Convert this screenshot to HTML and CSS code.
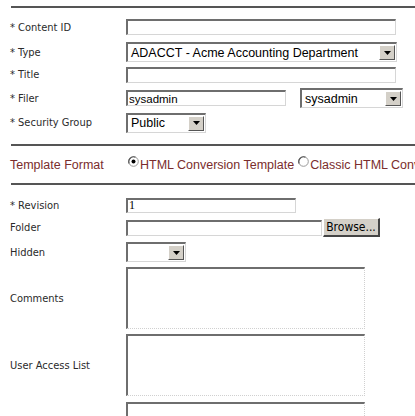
FILE: index.html
```html
<!DOCTYPE html>
<html lang="en">
<head>
    <meta charset="UTF-8">
    <title>Check In</title>
    <link rel="stylesheet" href="styles.css">
</head>
<body>
    <div class="form">
        <div class="row sep-row">
            <div class="label"><hr></div>
            <div class="field"><hr></div>
        </div>

        <div class="row r-content">
            <div class="label">* Content ID</div>
            <div class="field"><input type="text" class="text w-long"></div>
        </div>

        <div class="row r-type">
            <div class="label">* Type</div>
            <div class="field">
                <div class="select w-type">
                    <span class="value">ADACCT - Acme Accounting Department</span>
                    <span class="arrow"><svg width="7" height="4" viewBox="0 0 7 4"><path d="M0 0h7L3.5 4z" fill="#000"/></svg></span>
                </div>
            </div>
        </div>

        <div class="row r-title">
            <div class="label">* Title</div>
            <div class="field"><input type="text" class="text w-long"></div>
        </div>

        <div class="row r-filer">
            <div class="label">* Filer</div>
            <div class="field">
                <input type="text" class="text w-filer" value="sysadmin">
                <div class="select w-filersel">
                    <span class="value">sysadmin</span>
                    <span class="arrow"><svg width="7" height="4" viewBox="0 0 7 4"><path d="M0 0h7L3.5 4z" fill="#000"/></svg></span>
                </div>
            </div>
        </div>

        <div class="row r-security">
            <div class="label">* Security Group</div>
            <div class="field">
                <div class="select w-group">
                    <span class="value">Public</span>
                    <span class="arrow"><svg width="7" height="4" viewBox="0 0 7 4"><path d="M0 0h7L3.5 4z" fill="#000"/></svg></span>
                </div>
            </div>
        </div>

        <div class="row sep-row r-sep2">
            <div class="label"><hr></div>
            <div class="field"><hr></div>
        </div>

        <div class="row r-format">
            <div class="label section">Template Format</div>
            <div class="field section">
                <span class="radio"><svg width="11" height="11" viewBox="0 0 11 11"><circle cx="5.5" cy="5.5" r="4.8" fill="#fff" stroke="#999"/><path d="M1.2 7.5A4.8 4.8 0 0 1 7.5 1.2" fill="none" stroke="#555" stroke-width="1.2"/><circle cx="5.5" cy="5.5" r="2" fill="#000"/></svg></span>HTML Conversion Template
                <span class="radio gap"><svg width="11" height="11" viewBox="0 0 11 11"><circle cx="5.5" cy="5.5" r="4.8" fill="#fff" stroke="#999"/><path d="M1.2 7.5A4.8 4.8 0 0 1 7.5 1.2" fill="none" stroke="#555" stroke-width="1.2"/></svg></span>Classic HTML Conversion Template
            </div>
        </div>

        <div class="row sep-row r-sep3">
            <div class="label"><hr></div>
            <div class="field"><hr></div>
        </div>

        <div class="row r-revision">
            <div class="label">* Revision</div>
            <div class="field"><input type="text" class="text w-rev" value="1"></div>
        </div>

        <div class="row r-folder">
            <div class="label">Folder</div>
            <div class="field">
                <input type="text" class="text w-folder">
                <button class="browse">Browse...</button>
            </div>
        </div>

        <div class="row r-hidden">
            <div class="label">Hidden</div>
            <div class="field">
                <div class="select w-hidden">
                    <span class="value"></span>
                    <span class="arrow"><svg width="7" height="4" viewBox="0 0 7 4"><path d="M0 0h7L3.5 4z" fill="#000"/></svg></span>
                </div>
            </div>
        </div>

        <div class="row r-comments">
            <div class="label">Comments</div>
            <div class="field"><textarea></textarea></div>
        </div>

        <div class="row r-access">
            <div class="label">User Access List</div>
            <div class="field"><textarea></textarea></div>
        </div>

        <div class="row r-last">
            <div class="label"></div>
            <div class="field"><textarea></textarea></div>
        </div>
    </div>
</body>
</html>
```

FILE: styles.css
```css
body {
    margin: 0;
    background-color: #fff;
    color: #2a2a2a;
    font-family: 'DejaVu Sans Condensed', 'DejaVu Sans', sans-serif;
    font-size: 11px;
    overflow: hidden;
}

.form {
    padding-left: 10px;
    width: 600px;
}

.row {
    display: flex;
    align-items: center;
}

.label {
    width: 116px;
    flex-shrink: 0;
}

.field {
    display: flex;
    align-items: center;
    white-space: nowrap;
}

/* separator lines */
.sep-row .label hr {
    margin: 0 6px 0 1px;
}

.sep-row .field {
    flex: 1;
}

.sep-row .field hr {
    width: 289px;
    margin: 0;
}

hr {
    border: none;
    border-top: 2px solid #555;
    height: 0;
    width: 100%;
}

.sep-row { height: 14px; }
.r-content { height: 26px; }
.r-type { height: 24px; }
.r-title { height: 21px; }
.r-filer { height: 26px; }
.r-security { height: 23px; }
.r-sep2 { height: 22px; }
.r-format { height: 18px; }
.r-sep3 { height: 20px; }
.r-revision { height: 22px; }
.r-folder { height: 23px; }
.r-hidden { height: 26px; }
.r-comments { height: 66px; }
.r-access { height: 68px; }
.r-last { height: 70px; align-items: flex-start; padding-top: 3px; }

/* text inputs */
.text {
    box-sizing: border-box;
    height: 16px;
    padding: 0 1px;
    margin: 0;
    border-top: 2px solid #6e6e6e;
    border-left: 2px solid #6e6e6e;
    border-right: 1px solid #d6d6d6;
    border-bottom: 1px solid #d6d6d6;
    font-family: 'Liberation Sans', Arial, sans-serif;
    font-size: 11.5px;
    color: #000;
    background: #fff;
}

.w-long { width: 270px; }
.w-filer { width: 160px; margin-right: 14px; }
.w-rev { width: 170px; height: 15px; font-family: 'Liberation Serif', serif; font-size: 12px; }
.w-folder { width: 196px; }

/* drop-downs */
.select {
    box-sizing: border-box;
    display: flex;
    align-items: center;
    justify-content: space-between;
    height: 20px;
    border-top: 2px solid #6e6e6e;
    border-left: 2px solid #6e6e6e;
    border-right: 1px solid #d6d6d6;
    border-bottom: 1px solid #d6d6d6;
    background: #fff;
    font-family: 'Liberation Sans', Arial, sans-serif;
    font-size: 12.5px;
    color: #000;
    padding-right: 1px;
}

.select .value {
    padding-left: 3px;
}

.arrow {
    box-sizing: border-box;
    width: 16px;
    height: 15px;
    background: #d4d0c8;
    border-top: 1px solid #fff;
    border-left: 1px solid #fff;
    border-right: 1px solid #555;
    border-bottom: 1px solid #555;
    display: flex;
    align-items: center;
    justify-content: center;
}

.w-type { width: 271px; }
.w-filersel { width: 103px; }
.w-group { width: 80px; }
.w-hidden { width: 60px; }

/* template format */
.section {
    font-family: 'Liberation Sans', Arial, sans-serif;
    font-size: 12.5px;
    color: #7a2d2d;
}

.radio {
    display: inline-flex;
    align-items: flex-start;
    height: 13px;
    margin: 0 1px 0 2px;
    position: relative;
    top: -3px;
}

.radio.gap {
    margin-left: 4px;
}

/* browse button */
.browse {
    box-sizing: border-box;
    height: 19px;
    width: 57px;
    margin-left: 1px;
    padding: 0;
    background: #d4d0c8;
    border-top: 1px solid #fff;
    border-left: 1px solid #fff;
    border-right: 2px solid #444;
    border-bottom: 2px solid #444;
    font-family: 'DejaVu Sans Condensed', 'DejaVu Sans', sans-serif;
    font-size: 12px;
    color: #000;
}

textarea {
    box-sizing: border-box;
    width: 239px;
    height: 62px;
    margin: 0;
    resize: none;
    border-top: 2px solid #6e6e6e;
    border-left: 2px solid #6e6e6e;
    border-right: 1px dotted #d0d0d0;
    border-bottom: 1px dotted #d0d0d0;
    background: #fff;
}
```
